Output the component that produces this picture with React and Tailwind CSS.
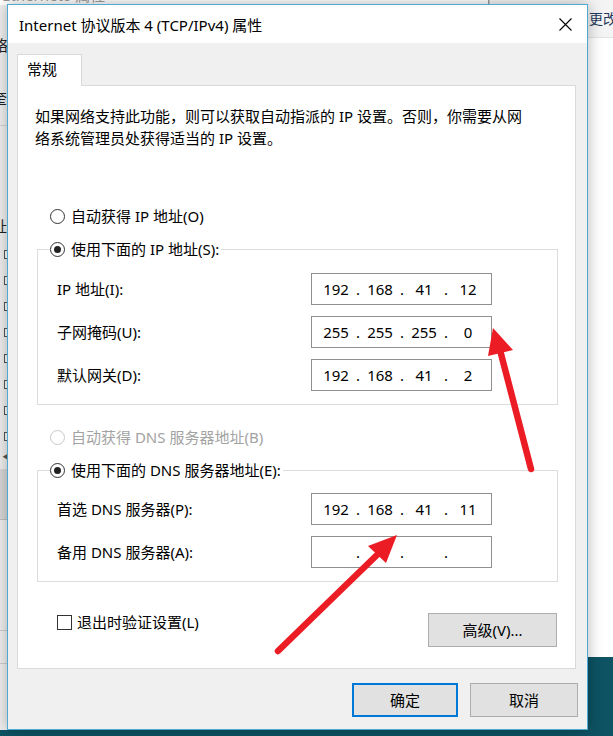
import { Fragment } from 'react';

const IpBox = ({ parts }) => (
  <div className="flex h-[32px] w-[181px] items-center border border-[#8f8f8f] bg-white pl-[7px] text-[15px] text-black">
    {parts.map((p, i) => (
      <Fragment key={i}>
        {i > 0 && <span className="w-[10px] text-center">.</span>}
        <span className="w-[34px] text-center">{p}</span>
      </Fragment>
    ))}
  </div>
);

const Radio = ({ checked, disabled, label }) => (
  <div className={`flex h-[20px] items-center gap-[6px] ${disabled ? 'text-[#a3a3a3]' : 'text-black'}`}>
    <span
      className={`flex h-[15px] w-[15px] items-center justify-center rounded-full border bg-white ${
        disabled ? 'border-[#c8c8c8]' : 'border-[#333]'
      }`}
    >
      {checked && <span className="h-[7px] w-[7px] rounded-full bg-[#222]" />}
    </span>
    <span>{label}</span>
  </div>
);

const Row = ({ label, parts }) => (
  <>
    <div className="flex items-center">{label}</div>
    <IpBox parts={parts} />
  </>
);

const Button = ({ children, primary, className = '' }) => (
  <button
    className={`flex h-[34px] items-center justify-center bg-[#e1e1e1] text-[15px] text-black ${
      primary ? 'border-2 border-[#0078d7]' : 'border border-[#adadad]'
    } ${className}`}
  >
    {children}
  </button>
);

export default function App() {
  return (
    <div className="relative h-[736px] w-[613px] overflow-hidden bg-[#0d5363] font-['Noto_Sans','Noto_Sans_CJK_SC',sans-serif] text-[15px] leading-[20px]">
      {/* window behind, right side */}
      <div className="absolute left-[489px] top-0 h-[657px] w-[140px] border-l border-[#c8c8c8] bg-white">
        <div className="flex h-[38px] items-center border-b border-[#e3e3e3] bg-[#f4f4f4] pl-[99px] text-[14px] whitespace-nowrap text-[#1e395b]">
          更改此连接的设置
        </div>
      </div>

      {/* window behind, left side: Ethernet0 属性 */}
      <div className="absolute left-0 top-0 flex h-[730px] w-[489px] flex-col border-r border-[#9a9a9a] bg-[#f0f0f0]">
        <div className="h-[5px] overflow-hidden bg-white">
          <div className="-mt-[15px] pl-[2px] text-[#9a9a9a]">Ethernet0 属性</div>
        </div>
        <div className="mt-[30px] -ml-[7px] text-[#222]">络</div>
        <div className="mt-[33px] -ml-[8px] text-[#222]">奎</div>
        <div className="mt-[17px] h-px bg-[#d5d5d5]" />
        <div className="mt-[90px] -ml-[8px] text-[#222]">址</div>
        <div className="mt-[14px] flex flex-col gap-[17px] pl-[4px]">
          {[0, 1, 2, 3, 4, 5, 6, 7].map(i => (
            <span key={i} className="h-[9px] w-[9px] border border-[#555] bg-white" />
          ))}
        </div>
        <div className="mt-[6px] pl-[2px] text-[9px] text-[#555]">◀</div>
        <div className="mt-[2px] h-[50px] bg-[#d9d9d9]" />
        <div className="h-px bg-[#c0c0c0]" />
        <div className="mt-[110px] h-px bg-[#d0d0d0]" />
        <div className="mt-[32px] h-px bg-[#d0d0d0]" />
      </div>

      {/* dialog */}
      <div className="absolute left-[7px] top-[4px] flex h-[726px] w-[581px] flex-col border border-[#4ea9d3] bg-[#f0f0f0] shadow-[0_0_14px_rgba(0,0,0,0.3)]">
        <div className="flex h-[38px] items-center justify-between bg-white pl-[11px] pr-[15px]">
          <span className="pt-[2px] text-black">Internet 协议版本 4 (TCP/IPv4) 属性</span>
          <svg width="13" height="13" viewBox="0 0 13 13">
            <path d="M0.5 0.5 L12.5 12.5 M12.5 0.5 L0.5 12.5" stroke="#000" strokeWidth="1.1" />
          </svg>
        </div>

        <div className="flex flex-col pl-[9px] pt-[11px]">
          <div className="relative z-10 -mb-px flex h-[32px] w-[65px] items-start border border-b-0 border-[#d9d9d9] bg-white pl-[9px] pt-[4px] text-black">
            常规
          </div>
          <div className="flex h-[584px] w-[559px] flex-col border border-[#d9d9d9] bg-white text-black">
            <p className="pl-[17px] pt-[19px] leading-[22px]">
              如果网络支持此功能，则可以获取自动指派的 IP 设置。否则，你需要从网
              <br />
              络系统管理员处获得适当的 IP 设置。
            </p>

            <div className="ml-[32px] mt-[57px]">
              <Radio label="自动获得 IP 地址(O)" />
            </div>

            <fieldset className="ml-[19px] mt-[13px] w-[521px] border border-[#dcdcdc]">
              <legend className="ml-[12px] pr-[2px]">
                <Radio checked label="使用下面的 IP 地址(S):" />
              </legend>
              <div className="grid grid-cols-[254px_181px] gap-y-[11px] pb-[13px] pl-[19px] pt-[14px]">
                <Row label="IP 地址(I):" parts={['192', '168', '41', '12']} />
                <Row label="子网掩码(U):" parts={['255', '255', '255', '0']} />
                <Row label="默认网关(D):" parts={['192', '168', '41', '2']} />
              </div>
            </fieldset>

            <div className="ml-[32px] mt-[22px]">
              <Radio disabled label="自动获得 DNS 服务器地址(B)" />
            </div>

            <fieldset className="ml-[19px] mt-[13px] w-[521px] border border-[#dcdcdc]">
              <legend className="ml-[12px] pr-[2px]">
                <Radio checked label="使用下面的 DNS 服务器地址(E):" />
              </legend>
              <div className="grid grid-cols-[254px_181px] gap-y-[11px] pb-[13px] pl-[19px] pt-[13px]">
                <Row label="首选 DNS 服务器(P):" parts={['192', '168', '41', '11']} />
                <Row label="备用 DNS 服务器(A):" parts={['', '', '', '']} />
              </div>
            </fieldset>

            <div className="mt-[30px] flex items-start justify-between pl-[39px] pr-[18px]">
              <div className="flex h-[20px] items-center gap-[5px]">
                <span className="h-[15px] w-[15px] border border-[#333] bg-white" />
                <span>退出时验证设置(L)</span>
              </div>
              <Button className="mt-[1px] w-[129px]">高级(V)...</Button>
            </div>
          </div>
        </div>

        <div className="mt-[14px] flex justify-end gap-[12px] pr-[9px]">
          <Button primary className="w-[106px]">确定</Button>
          <Button className="w-[108px]">取消</Button>
        </div>
      </div>

      {/* red annotation arrows */}
      <svg className="pointer-events-none absolute left-0 top-0" width="613" height="736">
        <line x1="531" y1="469" x2="500" y2="350" stroke="#ec1c24" strokeWidth="6.5" strokeLinecap="round" />
        <polygon points="493,328 488,356 513,350" fill="#ec1c24" />
        <line x1="278" y1="651" x2="379" y2="553" stroke="#ec1c24" strokeWidth="6.5" strokeLinecap="round" />
        <polygon points="397,535 368,546 386,563" fill="#ec1c24" />
      </svg>
    </div>
  );
}
